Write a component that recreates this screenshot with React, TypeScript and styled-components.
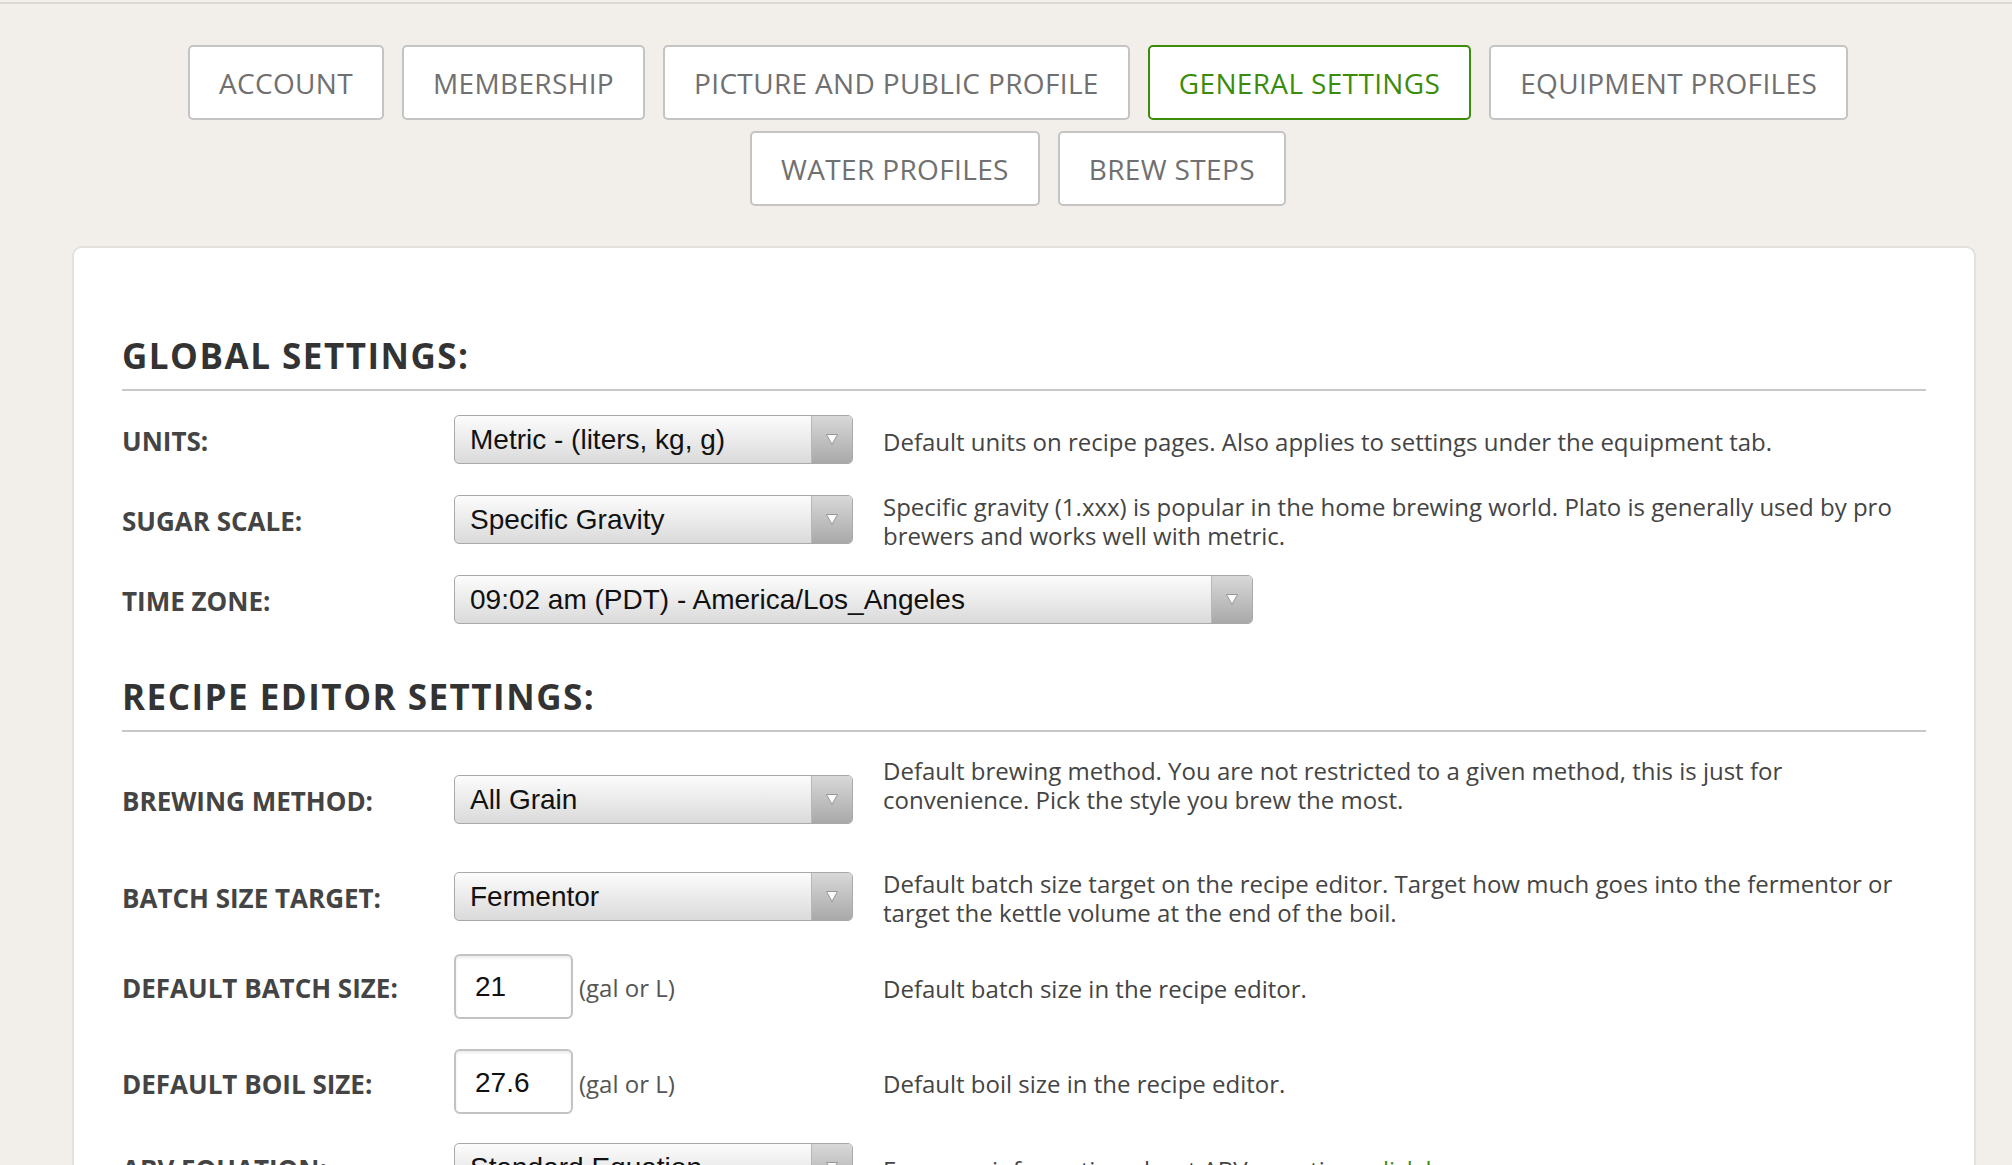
import styled, { createGlobalStyle } from "styled-components";

const GlobalStyle = createGlobalStyle`
  html, body {
    margin: 0;
    padding: 0;
  }
  body {
    background: #f2efea;
    font-family: "Open Sans", "Liberation Sans", sans-serif;
  }
`;

const TopRule = styled.div`
  height: 2px;
  margin-top: 2px;
  background: #dcdad6;
`;

const Page = styled.div`
  padding: 0 36px 0 72px;
`;

const TabNav = styled.nav`
  display: flex;
  flex-wrap: wrap;
  justify-content: center;
  gap: 11px 18px;
  margin: 41px 0 40px;
  padding-right: 12px;
`;

const Tab = styled.a<{ $active?: boolean }>`
  box-sizing: border-box;
  height: 75px;
  padding: 0 29px;
  display: flex;
  align-items: center;
  background: #fff;
  border: 2px solid ${(p) => (p.$active ? "#3b8c0b" : "#c4c4c4")};
  border-radius: 5px;
  color: ${(p) => (p.$active ? "#3b8c0b" : "#707070")};
  font-size: 28px;
  letter-spacing: 0.35px;
  text-transform: uppercase;
  text-decoration: none;
  white-space: nowrap;
  cursor: pointer;
`;

const Panel = styled.main`
  background: #fff;
  border: 2px solid #e4e1dc;
  border-radius: 10px;
  padding: 87px 48px 80px;
`;

const Section = styled.section`
  & + & {
    margin-top: 37px;
  }
`;

const SectionTitle = styled.h2`
  margin: 0;
  font-size: 35px;
  line-height: 42px;
  font-weight: 700;
  letter-spacing: 1.5px;
  color: #333;
  text-transform: uppercase;
`;

const Rule = styled.hr`
  margin: 12px 0 8px;
  border: 0;
  height: 2px;
  background: #c8c8c8;
`;

const Row = styled.div<{ $h: number }>`
  display: grid;
  grid-template-columns: 332px 429px 1fr;
  align-items: center;
  height: ${(p) => p.$h}px;
`;

const Label = styled.div`
  padding-top: 4px;
  font-size: 26px;
  font-weight: 700;
  color: #444;
  text-transform: uppercase;
  white-space: nowrap;
`;

const Control = styled.div<{ $wide?: boolean }>`
  display: flex;
  align-items: center;
  grid-column: ${(p) => (p.$wide ? "2 / 4" : "2")};
`;

const Desc = styled.p<{ $lift?: number }>`
  margin: 0 0 ${(p) => p.$lift ?? 0}px;
  padding-top: 4px;
  max-width: 1035px;
  font-size: 24px;
  line-height: 29px;
  color: #444;
`;

const Green = styled.a`
  color: #3b8c0b;
  text-decoration: none;
`;

const SelectBox = styled.div<{ $w: number }>`
  box-sizing: border-box;
  width: ${(p) => p.$w}px;
  height: 49px;
  display: flex;
  border: 1px solid #a9a9a9;
  border-radius: 5px;
  background: linear-gradient(#fcfcfc, #dadada);
  overflow: hidden;
  font-family: "Liberation Sans", Arial, sans-serif;
  font-size: 28px;
  color: #111;
`;

const SelectText = styled.span`
  flex: 1;
  display: flex;
  align-items: center;
  padding: 2px 0 0 15px;
  white-space: nowrap;
`;

const SelectArrow = styled.span`
  width: 40px;
  display: flex;
  align-items: center;
  justify-content: center;
  border-left: 1px solid #b8b8b8;
  background: linear-gradient(#d8d8d8, #a9a9a9);
`;

const NumberField = styled.input`
  box-sizing: border-box;
  width: 119px;
  height: 65px;
  padding: 2px 0 0 19px;
  border: 2px solid #c3c3c3;
  border-radius: 6px;
  box-shadow: inset 0 2px 3px rgba(0, 0, 0, 0.08);
  background: #fff;
  font-family: "Liberation Sans", Arial, sans-serif;
  font-size: 28px;
  color: #111;
  outline: none;
`;

const Unit = styled.span`
  margin-left: 6px;
  padding-top: 3px;
  font-size: 24px;
  color: #555;
`;

function Select({ value, width = 399 }: { value: string; width?: number }) {
  return (
    <SelectBox $w={width}>
      <SelectText>{value}</SelectText>
      <SelectArrow>
        <svg width="14" height="13" viewBox="0 0 14 13">
          <polygon points="1.5,1.5 12.5,1.5 7,11.5" fill="#fbfbfb" stroke="#969696" strokeWidth="1" />
        </svg>
      </SelectArrow>
    </SelectBox>
  );
}

type Setting = {
  label: string;
  h: number;
  select?: string;
  selectWidth?: number;
  number?: string;
  desc?: React.ReactNode;
  lift?: number;
};

const TABS = [
  "Account",
  "Membership",
  "Picture and Public Profile",
  "General Settings",
  "Equipment Profiles",
  "Water Profiles",
  "Brew Steps",
];

const GLOBAL: Setting[] = [
  {
    label: "Units:",
    h: 80,
    select: "Metric - (liters, kg, g)",
    desc: "Default units on recipe pages. Also applies to settings under the equipment tab.",
  },
  {
    label: "Sugar Scale:",
    h: 80,
    select: "Specific Gravity",
    desc: "Specific gravity (1.xxx) is popular in the home brewing world. Plato is generally used by pro brewers and works well with metric.",
  },
  {
    label: "Time Zone:",
    h: 80,
    select: "09:02 am (PDT) - America/Los_Angeles",
    selectWidth: 799,
  },
];

const RECIPE: Setting[] = [
  {
    label: "Brewing Method:",
    h: 118,
    select: "All Grain",
    lift: 32,
    desc: "Default brewing method. You are not restricted to a given method, this is just for convenience. Pick the style you brew the most.",
  },
  {
    label: "Batch Size Target:",
    h: 76,
    select: "Fermentor",
    desc: "Default batch size target on the recipe editor. Target how much goes into the fermentor or target the kettle volume at the end of the boil.",
  },
  {
    label: "Default Batch Size:",
    h: 104,
    number: "21",
    desc: "Default batch size in the recipe editor.",
  },
  {
    label: "Default Boil Size:",
    h: 87,
    number: "27.6",
    desc: "Default boil size in the recipe editor.",
  },
  {
    label: "ABV Equation:",
    h: 84,
    select: "Standard Equation",
    desc: (
      <>
        For more information about ABV equations <Green>click here</Green>
      </>
    ),
  },
];

function SettingRow({ s }: { s: Setting }) {
  const wide = (s.selectWidth ?? 0) > 429;
  return (
    <Row $h={s.h}>
      <Label>{s.label}</Label>
      <Control $wide={wide}>
        {s.select && <Select value={s.select} width={s.selectWidth} />}
        {s.number && (
          <>
            <NumberField defaultValue={s.number} />
            <Unit>(gal or L)</Unit>
          </>
        )}
      </Control>
      {s.desc && <Desc $lift={s.lift}>{s.desc}</Desc>}
    </Row>
  );
}

function SettingsSection({ title, rows }: { title: string; rows: Setting[] }) {
  return (
    <Section>
      <SectionTitle>{title}</SectionTitle>
      <Rule />
      {rows.map((s) => (
        <SettingRow key={s.label} s={s} />
      ))}
    </Section>
  );
}

export default function App() {
  return (
    <>
      <GlobalStyle />
      <TopRule />
      <Page>
        <TabNav>
          {TABS.map((t) => (
            <Tab key={t} $active={t === "General Settings"}>
              {t}
            </Tab>
          ))}
        </TabNav>
        <Panel>
          <SettingsSection title="Global Settings:" rows={GLOBAL} />
          <SettingsSection title="Recipe Editor Settings:" rows={RECIPE} />
        </Panel>
      </Page>
    </>
  );
}
